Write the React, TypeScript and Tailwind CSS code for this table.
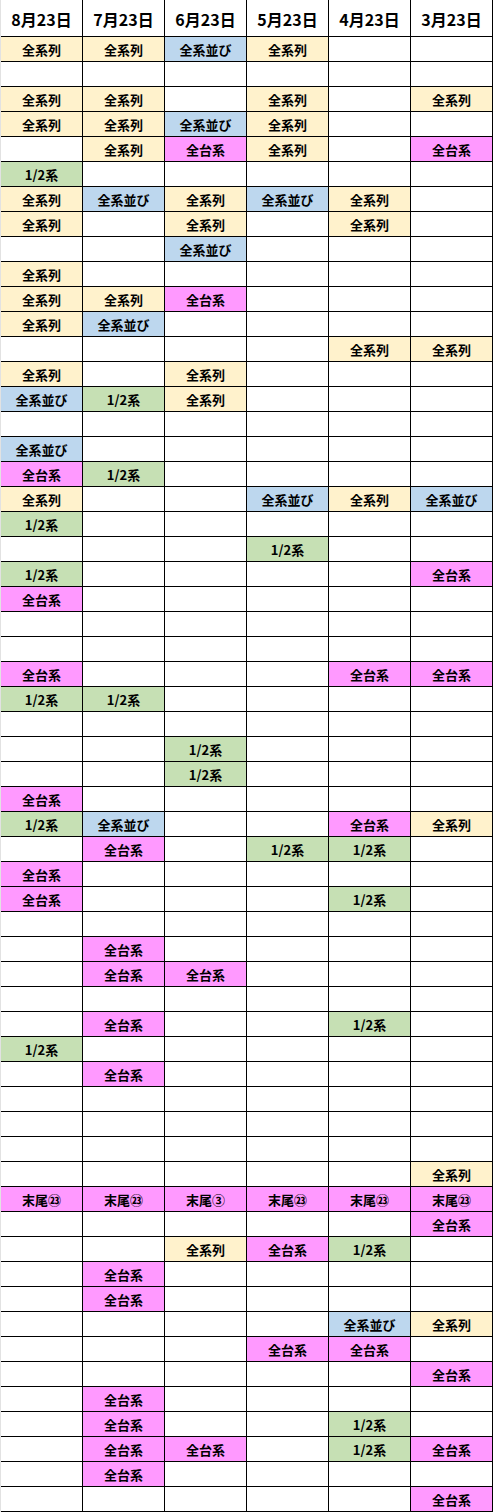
import React from "react";

const headers = ["8月23日", "7月23日", "6月23日", "5月23日", "4月23日", "3月23日"];

const rows: string[] = [
  "YYBY--",
  "------",
  "YY-Y-Y",
  "YYBY--",
  "-YPY-P",
  "G-----",
  "YBYBY-",
  "Y-Y-Y-",
  "--B---",
  "Y-----",
  "YYP---",
  "YB----",
  "----YY",
  "Y-Y---",
  "BGY---",
  "------",
  "B-----",
  "PG----",
  "Y--BYB",
  "G-----",
  "---G--",
  "G----P",
  "P-----",
  "------",
  "------",
  "P---PP",
  "GG----",
  "------",
  "--G---",
  "--G---",
  "P-----",
  "GB--PY",
  "-P-GG-",
  "P-----",
  "P---G-",
  "------",
  "-P----",
  "-PP---",
  "------",
  "-P--G-",
  "G-----",
  "-P----",
  "------",
  "------",
  "------",
  "-----Y",
  "MMNMMM",
  "-----P",
  "--YPG-",
  "-P----",
  "-P----",
  "----BY",
  "---PP-",
  "-----P",
  "-P----",
  "-P--G-",
  "-PP-GP",
  "-P----",
  "-----P",
];

const cellMap: Record<string, { text: string; cls: string }> = {
  Y: { text: "全系列", cls: "bg-[#fff2cc]" },
  B: { text: "全系並び", cls: "bg-[#bdd7ee]" },
  P: { text: "全台系", cls: "bg-[#ff99ff]" },
  G: { text: "1/2系", cls: "bg-[#c6e0b4]" },
  M: { text: "末尾㉓", cls: "bg-[#ff99ff]" },
  N: { text: "末尾③", cls: "bg-[#ff99ff]" },
  "-": { text: "", cls: "bg-white" },
};

export default function App() {
  return (
    <div
      className="w-[493px] h-[1512px] bg-white border-l border-[#e2e2e2] text-black"
      style={{ fontFamily: '"Noto Sans CJK JP", "Noto Sans", sans-serif' }}
    >
      <div className="grid grid-cols-[repeat(6,82px)]">
        {headers.map((h) => (
          <div
            key={h}
            className="h-[37px] border-r border-b border-black flex items-center justify-center text-[16px] font-bold leading-none pt-[1px]"
          >
            {h}
          </div>
        ))}
        {rows.map((r, ri) =>
          r.split("").map((c, ci) => {
            const m = cellMap[c];
            return (
              <div
                key={`${ri}-${ci}`}
                className={`h-[25px] border-r border-b border-black flex items-center justify-center text-[13px] font-bold leading-none ${m.cls}`}
              >
                {m.text}
              </div>
            );
          })
        )}
      </div>
    </div>
  );
}
